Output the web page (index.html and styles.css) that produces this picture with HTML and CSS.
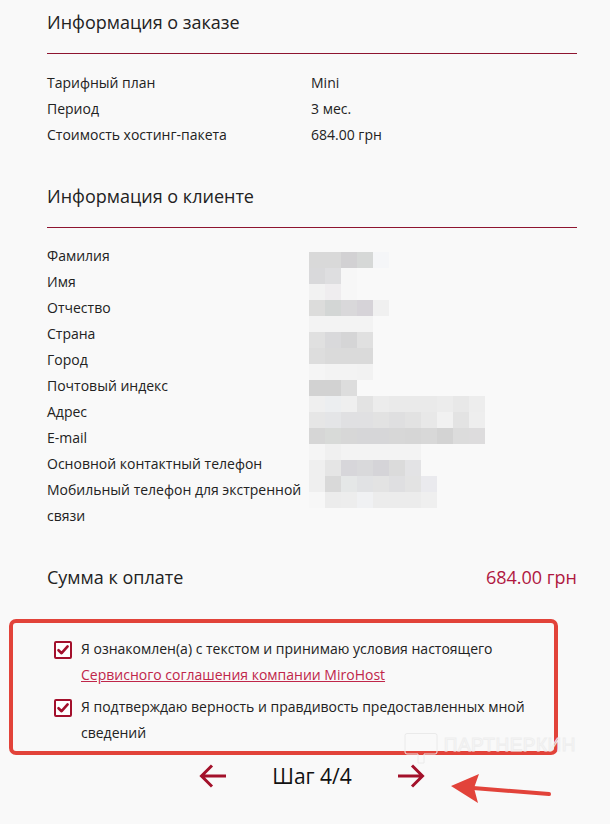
FILE: index.html
```html
<!DOCTYPE html>
<html lang="ru">
<head>
<meta charset="utf-8">
<title>Шаг 4/4</title>
<link rel="stylesheet" href="styles.css">
</head>
<body>
<main class="page">
  <section class="block">
    <h2 class="block-title">Информация о заказе</h2>
    <div class="rows">
      <div class="row"><span class="label">Тарифный план</span><span class="value">Mini</span></div>
      <div class="row"><span class="label">Период</span><span class="value">3 мес.</span></div>
      <div class="row"><span class="label">Стоимость хостинг-пакета</span><span class="value">684.00 грн</span></div>
    </div>
  </section>

  <section class="block block-client">
    <h2 class="block-title">Информация о клиенте</h2>
    <div class="rows rows-client">
      <div class="row"><span class="label">Фамилия</span><span class="value"></span></div>
      <div class="row"><span class="label">Имя</span><span class="value"></span></div>
      <div class="row"><span class="label">Отчество</span><span class="value"></span></div>
      <div class="row"><span class="label">Страна</span><span class="value"></span></div>
      <div class="row"><span class="label">Город</span><span class="value"></span></div>
      <div class="row"><span class="label">Почтовый индекс</span><span class="value"></span></div>
      <div class="row"><span class="label">Адрес</span><span class="value"></span></div>
      <div class="row"><span class="label">E-mail</span><span class="value"></span></div>
      <div class="row"><span class="label">Основной контактный телефон</span><span class="value"></span></div>
      <div class="row"><span class="label">Мобильный телефон для экстренной<br>связи</span><span class="value"></span></div>
      <svg class="redacted" width="176" height="256" viewBox="0 0 176 256" aria-hidden="true">
        <g shape-rendering="crispEdges">
          <rect x="0" y="0" width="16" height="16" fill="#d9d9d9"/><rect x="16" y="0" width="16" height="16" fill="#d9d9d9"/><rect x="32" y="0" width="16" height="16" fill="#d2d1d3"/><rect x="48" y="0" width="16" height="16" fill="#d6d8d7"/><rect x="64" y="0" width="16" height="16" fill="#f5f6f8"/>
          <rect x="0" y="16" width="16" height="16" fill="#d9d9db"/><rect x="16" y="16" width="16" height="16" fill="#dedee0"/><rect x="32" y="16" width="16" height="16" fill="#f7f7f7"/>
          <rect x="0" y="32" width="16" height="16" fill="#f2f2f2"/><rect x="16" y="32" width="16" height="16" fill="#efedef"/><rect x="32" y="32" width="16" height="16" fill="#f7f7f7"/>
          <rect x="0" y="48" width="16" height="16" fill="#dcdcdb"/><rect x="16" y="48" width="16" height="16" fill="#d3d6d5"/><rect x="32" y="48" width="16" height="16" fill="#d9d8da"/><rect x="48" y="48" width="16" height="16" fill="#d6d3d8"/><rect x="64" y="48" width="16" height="16" fill="#f0f0f0"/>
          <rect x="0" y="64" width="64" height="16" fill="#f3f3f3"/>
          <rect x="0" y="80" width="16" height="16" fill="#e0e0e0"/><rect x="16" y="80" width="16" height="16" fill="#d9d9db"/><rect x="32" y="80" width="16" height="16" fill="#d5d5d6"/><rect x="48" y="80" width="16" height="16" fill="#e0e0e0"/>
          <rect x="0" y="96" width="16" height="16" fill="#dddddd"/><rect x="16" y="96" width="48" height="16" fill="#dadada"/>
          <rect x="0" y="112" width="16" height="16" fill="#f5f5f5"/><rect x="16" y="112" width="32" height="16" fill="#f3f3f3"/><rect x="48" y="112" width="16" height="16" fill="#f2f2f2"/>
          <rect x="0" y="128" width="32" height="16" fill="#d2d2d2"/><rect x="32" y="128" width="16" height="16" fill="#dddddd"/>
          <rect x="0" y="144" width="16" height="16" fill="#efefef"/><rect x="16" y="144" width="16" height="16" fill="#eceef0"/><rect x="32" y="144" width="16" height="16" fill="#efefef"/><rect x="48" y="144" width="16" height="16" fill="#e3e3e3"/><rect x="64" y="144" width="16" height="16" fill="#ececec"/><rect x="80" y="144" width="48" height="16" fill="#eaeaea"/><rect x="128" y="144" width="16" height="16" fill="#ececec"/><rect x="144" y="144" width="16" height="16" fill="#e8e8e8"/><rect x="160" y="144" width="16" height="16" fill="#ededed"/>
          <rect x="0" y="160" width="16" height="16" fill="#e6e6e6"/><rect x="16" y="160" width="16" height="16" fill="#e4e5e7"/><rect x="32" y="160" width="32" height="16" fill="#e0e0e2"/><rect x="64" y="160" width="16" height="16" fill="#e2e2e2"/><rect x="80" y="160" width="16" height="16" fill="#dfdfe0"/><rect x="96" y="160" width="16" height="16" fill="#e2e2e2"/><rect x="112" y="160" width="16" height="16" fill="#e8e8e8"/><rect x="128" y="160" width="16" height="16" fill="#f1f1f1"/><rect x="144" y="160" width="16" height="16" fill="#e3e3e3"/><rect x="160" y="160" width="16" height="16" fill="#eeeeee"/>
          <rect x="0" y="176" width="16" height="16" fill="#d6d6d6"/><rect x="16" y="176" width="16" height="16" fill="#d8dad8"/><rect x="32" y="176" width="16" height="16" fill="#d7d7d7"/><rect x="48" y="176" width="32" height="16" fill="#d6d6d8"/><rect x="80" y="176" width="16" height="16" fill="#d7d7d7"/><rect x="96" y="176" width="16" height="16" fill="#d6d6d6"/><rect x="112" y="176" width="16" height="16" fill="#d8d8d8"/><rect x="128" y="176" width="16" height="16" fill="#d3d3d3"/><rect x="144" y="176" width="16" height="16" fill="#dcdcdc"/><rect x="160" y="176" width="16" height="16" fill="#dddcdd"/>
          <rect x="0" y="192" width="16" height="16" fill="#f5f5f5"/><rect x="16" y="192" width="16" height="16" fill="#f0f0f0"/><rect x="32" y="192" width="80" height="16" fill="#f3f3f3"/>
          <rect x="0" y="208" width="16" height="16" fill="#efefef"/><rect x="16" y="208" width="16" height="16" fill="#e5e5e5"/><rect x="32" y="208" width="16" height="16" fill="#d7d6da"/><rect x="48" y="208" width="16" height="16" fill="#d9d9db"/><rect x="64" y="208" width="16" height="16" fill="#d5d4d8"/><rect x="80" y="208" width="16" height="16" fill="#dbdbdb"/><rect x="96" y="208" width="16" height="16" fill="#e3e3e5"/>
          <rect x="0" y="224" width="16" height="16" fill="#efefef"/><rect x="16" y="224" width="16" height="16" fill="#d9d9d9"/><rect x="32" y="224" width="16" height="16" fill="#e5e7e7"/><rect x="48" y="224" width="16" height="16" fill="#e1e2e4"/><rect x="64" y="224" width="16" height="16" fill="#e3e3e3"/><rect x="80" y="224" width="16" height="16" fill="#dfdfe1"/><rect x="96" y="224" width="16" height="16" fill="#e3e3e3"/><rect x="112" y="224" width="16" height="16" fill="#eaeaee"/>
          <rect x="0" y="240" width="16" height="16" fill="#f7f7f7"/><rect x="16" y="240" width="16" height="16" fill="#ececec"/><rect x="32" y="240" width="16" height="16" fill="#ededed"/><rect x="48" y="240" width="16" height="16" fill="#f0f1f3"/><rect x="64" y="240" width="48" height="16" fill="#ececec"/><rect x="112" y="240" width="16" height="16" fill="#efefef"/>
        </g>
      </svg>
    </div>
  </section>

  <div class="total">
    <span class="total-label">Сумма к оплате</span>
    <span class="total-value">684.00 грн</span>
  </div>

  <div class="consent">
    <label class="check">
      <span class="box"><svg width="14" height="14" viewBox="0 0 14 14"><path d="M2.5 7.2 L5.6 10.2 L11.6 3.4" fill="none" stroke="#a3102c" stroke-width="2.6" stroke-linecap="round" stroke-linejoin="round"/></svg></span>
      <span class="check-text">Я ознакомлен(а) с текстом и принимаю условия настоящего <a href="#" class="link">Сервисного соглашения компании MiroHost</a></span>
    </label>
    <label class="check">
      <span class="box"><svg width="14" height="14" viewBox="0 0 14 14"><path d="M2.5 7.2 L5.6 10.2 L11.6 3.4" fill="none" stroke="#a3102c" stroke-width="2.6" stroke-linecap="round" stroke-linejoin="round"/></svg></span>
      <span class="check-text">Я подтверждаю верность и правдивость предоставленных мной сведений</span>
    </label>
    <div class="watermark" aria-hidden="true">
      <svg width="34" height="32" viewBox="0 0 34 32"><path d="M3 1.5 H31 A2 2 0 0 1 33 3.5 V20 A2 2 0 0 1 31 22 H20 V31 H14 V22 H3 A2 2 0 0 1 1 20 V3.5 A2 2 0 0 1 3 1.5 Z" fill="none" stroke="#eaeaea" stroke-width="1"/></svg>
      <span class="watermark-text">ПАРТНЕРКИН</span>
    </div>
  </div>

  <nav class="steps">
    <a href="#" class="step-arrow" aria-label="Назад"><svg width="28" height="26" viewBox="0 0 28 26"><path d="M27 13 H3 M13 2.5 L2.5 13 L13 23.5" fill="none" stroke="#a3112a" stroke-width="3"/></svg></a>
    <span class="step-label">Шаг 4/4</span>
    <a href="#" class="step-arrow" aria-label="Вперёд"><svg width="28" height="26" viewBox="0 0 28 26"><path d="M1 13 H25 M15 2.5 L25.5 13 L15 23.5" fill="none" stroke="#a3112a" stroke-width="3"/></svg></a>
  </nav>

  <svg class="pointer" width="110" height="45" viewBox="0 0 110 45" aria-hidden="true">
    <path d="M100 27 L24 21" stroke="#e2433a" stroke-width="4" stroke-linecap="round" fill="none"/>
    <polygon points="2,19 30,7 25,21 29,36" fill="#e2433a"/>
  </svg>
</main>
</body>
</html>
```

FILE: styles.css
```css
* { box-sizing: border-box; }

html, body {
  margin: 0;
  padding: 0;
  background: #f9f9f9;
}

body {
  font-family: "Open Sans", "Liberation Sans", sans-serif;
  color: #222;
  width: 610px;
  height: 824px;
  overflow: hidden;
}

.page {
  position: relative;
  padding: 0 33px 0 47px;
}

.block-title {
  margin: 0;
  padding: 10px 0 19px;
  font-size: 18px;
  line-height: 24px;
  font-weight: 400;
  color: #222;
  border-bottom: 1px solid #8e1530;
}

.block-client { margin-top: 26px; }

.rows {
  margin-top: 16px;
  font-size: 14px;
  line-height: 26px;
  color: #222;
}

.rows-client {
  position: relative;
  margin-top: 15px;
}

.row {
  display: flex;
}

.label {
  width: 264px;
  flex: none;
  padding-right: 6px;
}

.value { flex: 1; }

.redacted {
  position: absolute;
  left: 262px;
  top: 9px;
}

.total {
  display: flex;
  justify-content: space-between;
  align-items: center;
  margin-top: 36px;
  font-size: 18px;
  line-height: 24px;
}

.total-label { color: #222; }
.total-value { color: #b0173f; }

.consent {
  position: relative;
  margin: 30px 0 0 -38px;
  width: 549px;
  height: 136px;
  padding: 13px 6px 5px 41px;
  border: 4px solid #e2433a;
  border-radius: 7px;
  display: flex;
  flex-direction: column;
  gap: 6px;
}

.check {
  display: flex;
  align-items: flex-start;
  gap: 9px;
  font-size: 14px;
  line-height: 26px;
  color: #222;
}

.box {
  flex: none;
  width: 18px;
  height: 18px;
  margin-top: 5px;
  border: 2px solid #a3102c;
  border-radius: 2px;
  display: flex;
  align-items: center;
  justify-content: center;
  background: #fff;
}

.link {
  color: #c0264a;
  text-decoration: underline;
}

.watermark {
  position: absolute;
  right: -22px;
  bottom: -13px;
  display: flex;
  align-items: flex-start;
  gap: 6px;
  pointer-events: none;
}

.watermark-text {
  font-family: "Liberation Sans", sans-serif;
  font-size: 19px;
  line-height: 22px;
  color: transparent;
  -webkit-text-stroke: 1px #eeeeee;
  letter-spacing: 0.5px;
  margin-top: 2px;
}

.steps {
  display: flex;
  justify-content: center;
  align-items: center;
  gap: 45px;
  margin-top: 0;
  height: 42px;
}

.step-arrow {
  display: flex;
  line-height: 0;
}

.step-label {
  font-size: 21px;
  line-height: 26px;
  color: #111;
}

.pointer {
  position: absolute;
  left: 449px;
  top: 767px;
}
```
